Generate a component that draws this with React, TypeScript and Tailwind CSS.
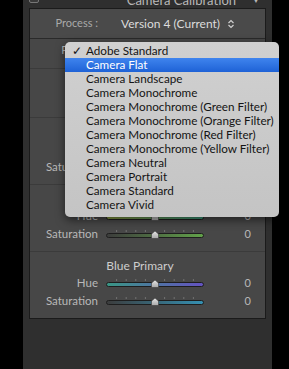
const profiles = [
  "Adobe Standard",
  "Camera Flat",
  "Camera Landscape",
  "Camera Monochrome",
  "Camera Monochrome (Green Filter)",
  "Camera Monochrome (Orange Filter)",
  "Camera Monochrome (Red Filter)",
  "Camera Monochrome (Yellow Filter)",
  "Camera Neutral",
  "Camera Portrait",
  "Camera Standard",
  "Camera Vivid",
];

const sections = [
  {
    title: "Shadows",
    rows: [{ label: "Tint", from: "#4f9b4a", to: "#b04ab0" }],
  },
  {
    title: "Red Primary",
    rows: [
      { label: "Hue", from: "#c0406a", to: "#c08a3a" },
      { label: "Saturation", from: "#3c3c3c", to: "#c04040" },
    ],
  },
  {
    title: "Green Primary",
    rows: [
      { label: "Hue", from: "#86963e", to: "#3a9478" },
      { label: "Saturation", from: "#3c3c3c", to: "#62a24a" },
    ],
  },
  {
    title: "Blue Primary",
    rows: [
      { label: "Hue", from: "#399684", to: "#6452c0" },
      { label: "Saturation", from: "#3c3c3c", to: "#3590b2" },
    ],
  },
];

function Slider({ from, to, id }: { from: string; to: string; id: string }) {
  const ticks = [1, 2, 3, 4, 6, 7, 8, 9];
  return (
    <svg width="98" height="12" viewBox="0 0 98 12" className="block">
      <defs>
        <linearGradient id={id} x1="0" x2="1" y1="0" y2="0">
          <stop offset="0" stopColor={from} />
          <stop offset="1" stopColor={to} />
        </linearGradient>
        <linearGradient id={id + "t"} x1="0" x2="0" y1="0" y2="1">
          <stop offset="0" stopColor="#e6e6e6" />
          <stop offset="1" stopColor="#a8a8a8" />
        </linearGradient>
      </defs>
      {ticks.map((t) => (
        <line key={t} x1={1 + t * 9.6} x2={1 + t * 9.6} y1="2" y2="4" stroke="#727272" strokeWidth="1" />
      ))}
      <rect x="0.5" y="5.5" width="97" height="4" rx="2" fill={`url(#${id})`} stroke="#1e1e1e" strokeWidth="1" />
      <path d="M49 3 L52.5 6 L52.5 10.5 L45.5 10.5 L45.5 6 Z" fill={`url(#${id}t)`} stroke="#3a3a3a" strokeWidth="0.6" />
    </svg>
  );
}

export default function App() {
  return (
    <div className="relative w-[289px] h-[369px] bg-black flex overflow-hidden" style={{ fontFamily: "Lato, 'Open Sans', sans-serif" }}>
      <div className="ml-[23px] w-[249px] h-full bg-[#2f2f2f] flex flex-col">
        <div className="h-[8px] overflow-hidden flex items-end px-[6px]">
          <div className="w-[10px] h-[12px] border border-[#777] rounded-[2px] bg-[#3a3a3a] self-end mb-[5px]" />
          <div className="flex-1 flex justify-end items-center -mt-[16px] pr-[6px]">
            <span className="text-[13px] text-[#b8b8b8] leading-[16px] mr-[16px] whitespace-nowrap">Camera Calibration</span>
            <span className="text-[8px] text-[#b8b8b8]">▼</span>
          </div>
        </div>
        <div className="mx-[6px] border border-[#1b1b1b] bg-[#474747]">
          <div className="h-[30px] flex items-center bg-[#4a4a4a] border-b border-[#2a2a2a]">
            <span className="w-[68px] text-right text-[11px] text-[#a9a9a9]">Process :</span>
            <span className="ml-[23px] text-[12px] text-[#dcdcdc] whitespace-nowrap">Version 4 (Current)</span>
            <span className="ml-[8px] flex items-center">
              <svg width="6" height="10" viewBox="0 0 6 10">
                <path d="M0.5 4 L3 1.5 L5.5 4" fill="none" stroke="#cfcfcf" strokeWidth="1.2" />
                <path d="M0.5 6 L3 8.5 L5.5 6" fill="none" stroke="#cfcfcf" strokeWidth="1.2" />
              </svg>
            </span>
          </div>
          <div className="h-[30px] flex items-center border-b border-[#3b3b3b]">
            <span className="w-[68px] text-right text-[11px] text-[#b5b5b5] -mt-[6px]">Profile :</span>
          </div>
          {sections.map((s, si) => (
            <div key={s.title} className={"pt-[6px] pb-[8px] " + (si < sections.length - 1 ? "border-b border-[#3b3b3b]" : "")}>
              <div className="h-[16px] flex items-center justify-center pr-[15px] text-[12px] text-[#cdcdcd]">{s.title}</div>
              {s.rows.map((r, ri) => (
                <div key={r.label} className="h-[18px] flex items-center">
                  <span className="w-[68px] text-right text-[11.5px] text-[#b8b8b8]">{r.label}</span>
                  <div className="ml-[8px]">
                    <Slider from={r.from} to={r.to} id={`g${si}${ri}`} />
                  </div>
                  <span className="flex-1 text-right pr-[14px] text-[11px] text-[#b8b8b8]">0</span>
                </div>
              ))}
            </div>
          ))}
        </div>
      </div>

      <div className="absolute left-[65px] top-[42px] w-[214px] h-[175px] rounded-[5px] bg-gradient-to-b from-[#d0d0d0] to-[#c4c4c4] shadow-[0_3px_10px_rgba(0,0,0,0.55)] pt-[2px]">
        {profiles.map((p, i) => (
          <div
            key={p}
            className={
              "h-[14px] flex items-center text-[11.7px] leading-none whitespace-nowrap " +
              (i === 1 ? "bg-gradient-to-b from-[#3f84ee] to-[#1e62d6] text-white" : "text-[#141414]")
            }
          >
            <span className="w-[21px] shrink-0 pl-[7px] text-[12px]">{i === 0 ? "✓" : ""}</span>
            <span>{p}</span>
          </div>
        ))}
      </div>
    </div>
  );
}
